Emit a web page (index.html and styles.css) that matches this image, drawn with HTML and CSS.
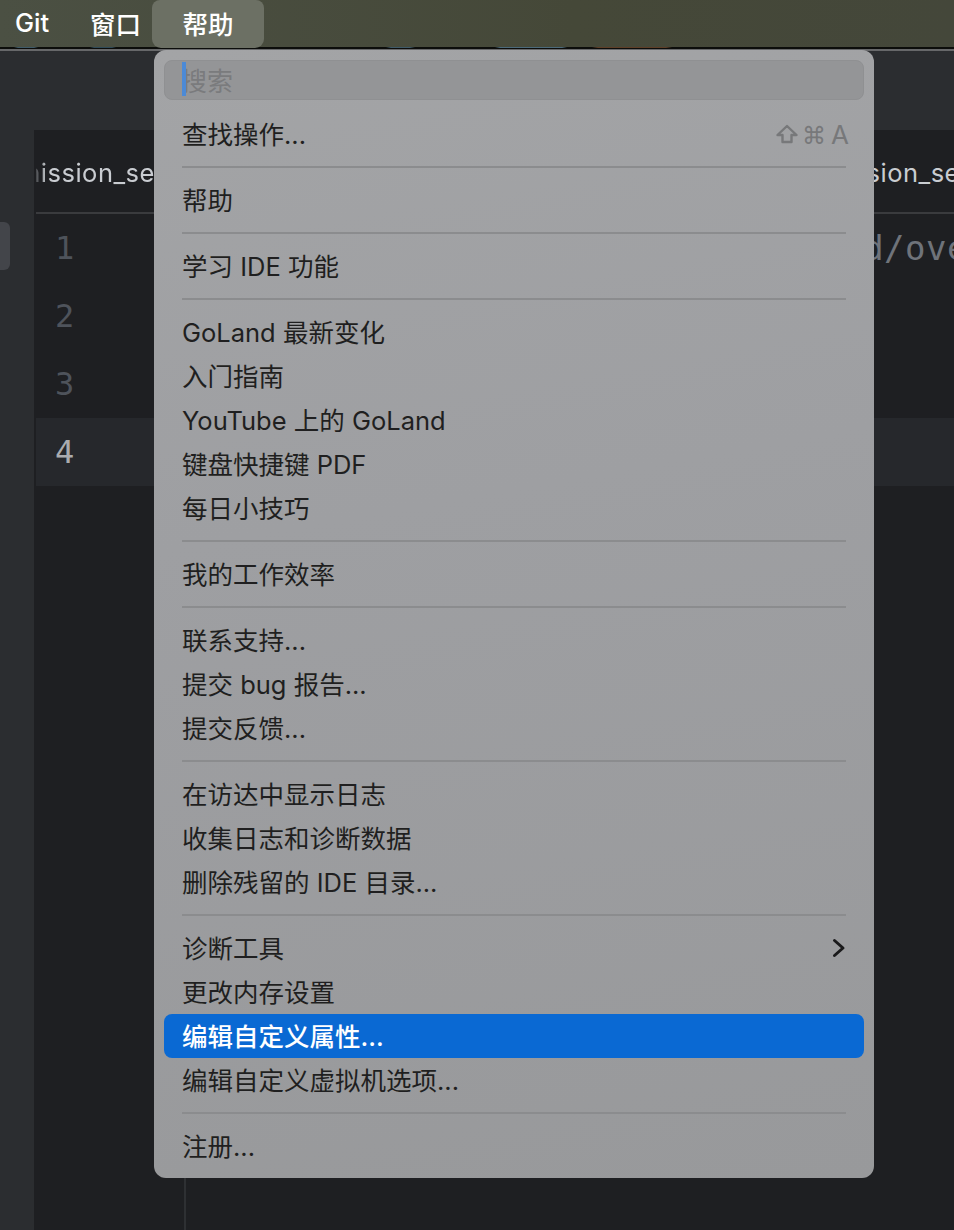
FILE: index.html
```html
<!DOCTYPE html>
<html lang="zh-CN">
<head>
<meta charset="utf-8">
<title>帮助菜单</title>
<link rel="stylesheet" href="styles.css">
</head>
<body>
<div class="app">
  <header class="menubar">
    <span class="menubar-item item-git">Git</span>
    <span class="menubar-item item-window">窗口</span>
    <span class="menubar-item item-help">帮助</span>
  </header>
  <div class="toolbar"></div>
  <div class="workspace">
    <aside class="sidebar"><div class="sidebar-active"></div></aside>
    <main class="editor">
      <div class="tabs">
        <span class="tab-left">mission_se</span>
        <span class="tab-right">ssion_se</span>
      </div>
      <div class="code">
        <div class="line"><span class="num">1</span><span class="code-text">d/ove</span></div>
        <div class="line"><span class="num">2</span></div>
        <div class="line"><span class="num">3</span></div>
        <div class="line current"><span class="num">4</span></div>
        <div class="gutter-rule"></div>
      </div>
    </main>
  </div>
</div>

<nav class="menu">
  <div class="search"><span class="caret"></span><span class="placeholder">搜索</span></div>
  <div class="menu-item first">
    <span>查找操作...</span>
    <span class="shortcut">
      <svg class="shift" viewBox="0 0 22 20" width="22" height="20" aria-hidden="true"><path d="M11 2 L20.5 11 H15.5 V18 H6.5 V11 H1.5 Z" fill="none" stroke="currentColor" stroke-width="2.4" stroke-linejoin="round"/></svg>
      <span class="cmd">⌘</span>
      <span class="key">A</span>
    </span>
  </div>
  <div class="sep"></div>
  <div class="menu-item">帮助</div>
  <div class="sep"></div>
  <div class="menu-item">学习 IDE 功能</div>
  <div class="sep"></div>
  <div class="menu-item">GoLand 最新变化</div>
  <div class="menu-item">入门指南</div>
  <div class="menu-item">YouTube 上的 GoLand</div>
  <div class="menu-item">键盘快捷键 PDF</div>
  <div class="menu-item">每日小技巧</div>
  <div class="sep"></div>
  <div class="menu-item">我的工作效率</div>
  <div class="sep"></div>
  <div class="menu-item">联系支持...</div>
  <div class="menu-item">提交 bug 报告...</div>
  <div class="menu-item">提交反馈...</div>
  <div class="sep"></div>
  <div class="menu-item">在访达中显示日志</div>
  <div class="menu-item">收集日志和诊断数据</div>
  <div class="menu-item">删除残留的 IDE 目录...</div>
  <div class="sep"></div>
  <div class="menu-item">
    <span>诊断工具</span>
    <svg class="chevron" viewBox="0 0 14 20" width="14" height="20" aria-hidden="true"><path d="M2.5 2.5 L11 10 L2.5 17.5" fill="none" stroke="currentColor" stroke-width="3" stroke-linecap="round" stroke-linejoin="round"/></svg>
  </div>
  <div class="menu-item">更改内存设置</div>
  <div class="menu-item active">编辑自定义属性...</div>
  <div class="menu-item">编辑自定义虚拟机选项...</div>
  <div class="sep"></div>
  <div class="menu-item">注册...</div>
</nav>
</body>
</html>
```
FILE: styles.css
```css
* { box-sizing: border-box; }

html, body {
  margin: 0;
  height: 1230px;
  overflow: hidden;
  background: #1e1f22;
  font-family: Inter, "Noto Sans CJK SC", sans-serif;
}

.app {
  display: flex;
  flex-direction: column;
  height: 1230px;
}

.menubar {
  flex: none;
  height: 51px;
  display: flex;
  align-items: flex-start;
  padding-left: 15px;
  background:
    linear-gradient(90deg, #0000 14px, #3f5a68 18px, #3f5a68 34px, #0000 38px, #0000 90px, #2f4a58 94px, #2f4a58 112px, #0000 116px, #0000 386px, #3f5a68 391px, #3f5a68 410px, #0000 415px, #0000 495px, #4c6a7a 500px, #4c6a7a 562px, #0000 567px, #0000 592px, #5e3f28 598px, #5e3f28 666px, #0000 672px) 0 47px / 100% 1px no-repeat,
    linear-gradient(#0000 47px, #0c0d0b 47px, #0c0d0b 49px, #67686a 49px),
    linear-gradient(90deg, #4b5043, #454838 60%, #44473a);
  color: #fff;
  font-size: 25.5px;
  font-weight: 500;
}

.menubar-item {
  height: 48px;
  display: flex;
  align-items: center;
  padding-bottom: 4px;
}

.item-git { width: 75px; }
.item-window { width: 62px; }
.item-help {
  width: 112px;
  justify-content: center;
  border-radius: 8px 8px 9px 9px;
  background: #6c7064;
}

.toolbar {
  flex: none;
  height: 79px;
  background: #2b2d30;
}

.workspace {
  flex: 1;
  display: flex;
  min-height: 0;
}

.sidebar {
  flex: none;
  width: 34px;
  padding-top: 92px;
  background: #2b2d30;
}

.sidebar-active {
  width: 10px;
  height: 48px;
  border-radius: 0 6px 6px 0;
  background: #43454a;
}

.editor {
  flex: 1;
  min-width: 0;
  display: flex;
  flex-direction: column;
  background: #1e1f22;
}

.tabs {
  flex: none;
  height: 84px;
  margin-left: 2px;
  display: flex;
  justify-content: space-between;
  align-items: center;
  padding-top: 2px;
  border-bottom: 2px solid #3a3b3e;
  overflow: hidden;
  color: #c9ccd1;
  font-size: 25.5px;
  letter-spacing: 0.5px;
}

.tab-left {
  margin-left: -18px;
  -webkit-mask-image: linear-gradient(90deg, #0000 15px, #000 28px);
  mask-image: linear-gradient(90deg, #0000 15px, #000 28px);
}

.tab-right { margin-right: -6px; }

.code {
  position: relative;
  flex: 1;
  margin-left: 2px;
  font-family: "DejaVu Sans Mono", monospace;
  font-size: 32px;
}

.line {
  height: 68px;
  display: flex;
  align-items: center;
  justify-content: space-between;
  padding-left: 19px;
  color: #4e535b;
}

.line.current {
  background: #26282c;
  color: #aaacaf;
}

.code-text {
  margin-right: -14px;
  font-size: 34px;
  letter-spacing: 0.5px;
  color: #6f737a;
}

.gutter-rule {
  position: absolute;
  top: 0;
  bottom: 0;
  left: 148px;
  width: 2px;
  background: #2e3033;
}

.menu {
  position: absolute;
  left: 154px;
  top: 50px;
  width: 720px;
  height: 1128px;
  padding: 10px;
  border-radius: 12px;
  background: linear-gradient(170deg, #a3a4a6, #9e9fa2 40%, #98999b);
  color: #1f1f20;
  font-size: 25.5px;
}

.search {
  position: relative;
  height: 40px;
  display: flex;
  align-items: center;
  padding-left: 16px;
  padding-bottom: 2px;
  border: 1px solid #8f9092;
  border-radius: 8px;
  background: #949597;
}

.caret {
  position: absolute;
  left: 17px;
  top: 1px;
  width: 4px;
  height: 34px;
  background: #4c8ad6;
}

.placeholder { color: #7a7b7d; font-size: 26px; }

.menu-item {
  height: 44px;
  display: flex;
  align-items: center;
  justify-content: space-between;
  padding: 0 18px 4px 18px;
  border-radius: 8px;
  white-space: nowrap;
}

.menu-item.first { margin-top: 12px; padding-right: 15px; }

.menu-item.active {
  background: #0a69d3;
  color: #fff;
  font-weight: 500;
}

.sep {
  height: 2px;
  margin: 10px 18px;
  background: #8b8c8e;
}

.shortcut {
  display: flex;
  align-items: center;
  margin-top: 4px;
  color: #77787a;
}

.shift { margin-right: 4px; margin-left: 1px; }

.cmd {
  font-family: "DejaVu Sans", sans-serif;
  font-size: 24px;
  margin-top: 4px;
  margin-right: 5px;
}

.key { font-size: 26px; }

.chevron { color: #1a1a1b; margin-top: 4px; }
```
